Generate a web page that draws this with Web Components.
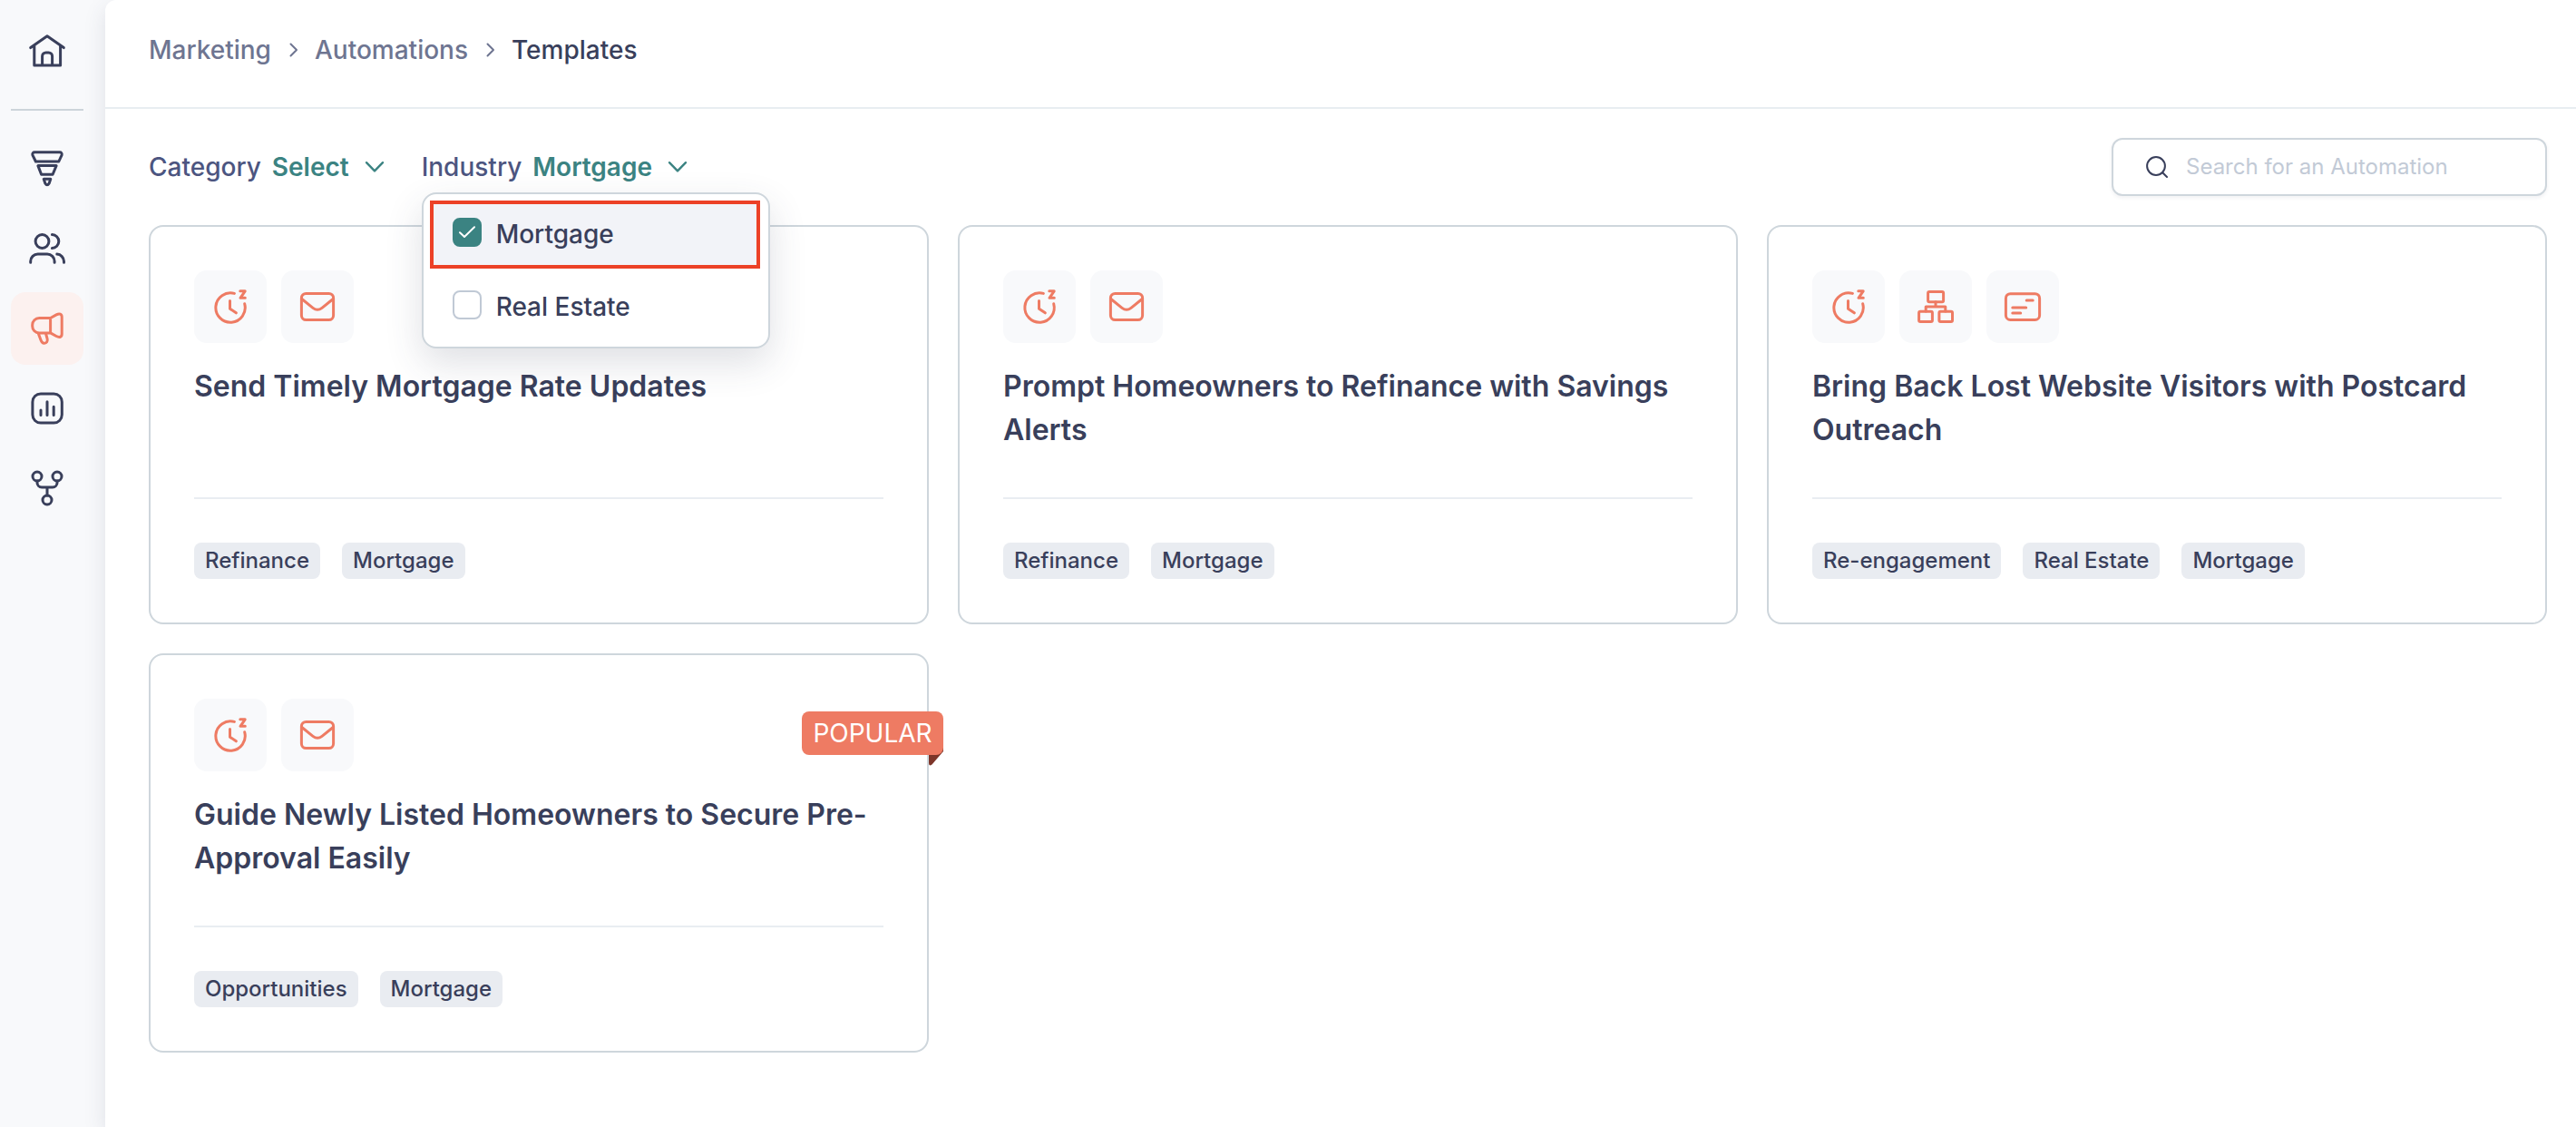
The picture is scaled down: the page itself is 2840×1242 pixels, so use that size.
<!DOCTYPE html>
<html lang="en">
<head>
<meta charset="utf-8">
<title>Automation templates</title>
<style>
html,body{margin:0;height:100%}
body{font-family:Inter,"Liberation Sans",sans-serif;color:#393f5b;background:#f8f9fb;overflow:hidden}
</style>
</head>
<body>
<app-shell>
  <side-nav slot="nav"></side-nav>
  <bread-crumbs slot="header">
    <span>Marketing</span><span>Automations</span><span>Templates</span>
  </bread-crumbs>
  <filter-bar>
    <filter-select label="Category" value="Select"></filter-select>
    <filter-select label="Industry" value="Mortgage">
      <option-menu slot="menu">
        <check-option checked>Mortgage</check-option>
        <check-option>Real Estate</check-option>
      </option-menu>
    </filter-select>
    <search-box slot="end" placeholder="Search for an Automation"></search-box>
  </filter-bar>
  <card-grid>
    <template-card icons="timer mail">Send Timely Mortgage Rate Updates
      <tag-chip slot="tags">Refinance</tag-chip><tag-chip slot="tags">Mortgage</tag-chip>
    </template-card>
    <template-card icons="timer mail">Prompt Homeowners to Refinance with Savings Alerts
      <tag-chip slot="tags">Refinance</tag-chip><tag-chip slot="tags">Mortgage</tag-chip>
    </template-card>
    <template-card icons="timer tree postcard">Bring Back Lost Website Visitors with Postcard Outreach
      <tag-chip slot="tags">Re-engagement</tag-chip><tag-chip slot="tags">Real Estate</tag-chip><tag-chip slot="tags">Mortgage</tag-chip>
    </template-card>
    <template-card icons="timer mail">Guide Newly Listed Homeowners to Secure Pre-Approval Easily
      <corner-ribbon slot="ribbon">POPULAR</corner-ribbon>
      <tag-chip slot="tags">Opportunities</tag-chip><tag-chip slot="tags">Mortgage</tag-chip>
    </template-card>
  </card-grid>
</app-shell>
<script>
const ICONS = {
  home: '<path d="M21.7 36.6 40 23.7l18.3 12.9M25.8 34.5V56h28.8V34.5M34.6 56V46a4 4 0 0 1 4-4h3a4 4 0 0 1 4 4v10"/>',
  funnel: '<path d="M26.2 21.8h27.6a2.3 2.3 0 0 1 2.3 3l-3.3 7.2H27.4l-3.5-7.2a2.3 2.3 0 0 1 2.3-3zM29.9 36.6h20.2l-4 9.7H33.6zM36.2 51.3h7.6l-1.6 4.6q-2.2 3.8-4.4 0z"/>',
  users: '<circle cx="34.5" cy="32" r="7.4"/><path d="M45.4 24.6a7.4 7.4 0 0 1 0 14.8M21.7 55.3V54a8 8 0 0 1 8-8h10.4a8 8 0 0 1 8 8v1.3M50.8 46.1a8.2 8.2 0 0 1 7.7 8v1.2"/>',
  megaphone: '<path d="M43.6 28.5H31.2a7.5 7.5 0 0 0-7.5 7.5v1.4a7.5 7.5 0 0 0 7.5 7.5h12.4zM43.6 28.500l6.500-3.600c3.500-1.900 6.100-1 6.100 2.600v18.400c0 3.600-2.600 4.500-6.100 2.600l-6.500-3.600M30.2 45.2l2.700 7.400c1 2.800 2.400 3.900 4 3.700 2.600-.2 3.900-2.400 3.200-5l-1.600-5.800"/>',
  chart: '<rect x="23.9" y="23.9" width="32.4" height="32.2" rx="9"/><path d="M33 42v5.6M40 32.8v14.8M47.2 38.2v9.4"/>',
  branch: '<circle cx="29" cy="27" r="5"/><circle cx="51" cy="27" r="5"/><circle cx="40" cy="53" r="5"/><path d="M29 32v2a5 5 0 0 0 5 5h12a5 5 0 0 0 5-5v-2M40 39v9"/>',
  timer: '<path d="M44.4 25.4A16.2 16.2 0 1 0 55.7 36.8M39.5 33.5v8.7l6.8 4.6"/><path d="M50.8 22.8h5.4l-5.2 7.5h5.300"/>',
  mail: '<rect x="22.4" y="25.4" width="35.2" height="29.2" rx="5"/><path d="M22.800 31.500 35 41.300q5 4 10 0l12.200-9.800"/>',
  tree: '<rect x="31.6" y="23.4" width="17" height="11.4" rx="1.5"/><rect x="21.6" y="45.2" width="14.8" height="11.2" rx="1.5"/><rect x="43.9" y="45.2" width="14.6" height="11.2" rx="1.5"/><path d="M40 34.8V40M29.2 45V40h21.6v5"/>',
  postcard: '<rect x="21.4" y="25.7" width="37.2" height="28.7" rx="5"/><path d="M44.2 33h7M28.8 41h14.9M28.8 47h8.9"/>'
};
const glyph = name => `<svg viewBox="0 0 80 80" width="80" height="80" fill="none" stroke="currentColor" stroke-width="3" stroke-linecap="round" stroke-linejoin="round" aria-hidden="true">${ICONS[name]}</svg>`;

class Base extends HTMLElement {
  connectedCallback() {
    if (this.shadowRoot) return;
    this.attachShadow({ mode: 'open' }).innerHTML =
      `<style>*{box-sizing:border-box}:host{box-sizing:border-box}svg{display:block;flex:none}${this.css}</style>${this.html}`;
  }
}
const define = (tag, css, html) => customElements.define(tag, class extends Base {
  get css() { return css; }
  get html() { return typeof html === 'function' ? html(this) : html; }
});

define('app-shell', `
  :host{display:flex;height:100vh;background:#f8f9fb}
  main{flex:1;min-width:0;background:#fff;border-top-left-radius:12px;box-shadow:0 8px 24px rgba(54,61,89,.13)}
  header{display:flex;height:120px;border-bottom:2px solid #e8edf1;padding:33px 48px 0}
  section{padding:32px 32px 0 48px}`,
  '<slot name="nav"></slot><main><header><slot name="header"></slot></header><section><slot></slot></section></main>');

define('nav-item', `
  :host{display:block;width:80px;height:80px;border-radius:16px;color:#393f5b}
  :host([active]){background:#fcf1ef;color:#ee7b63}`,
  el => glyph(el.getAttribute('icon')));

define('side-nav', `
  :host{display:flex;flex-direction:column;align-items:flex-start;width:116px;padding:16px 12px}
  hr{width:80px;height:2px;border:0;margin:24px 0;background:#cdd4da}
  nav{display:flex;flex-direction:column;gap:8px}`,
  `<nav-item icon="home"></nav-item><hr><nav>${['funnel', 'users', 'megaphone', 'chart', 'branch']
    .map(n => `<nav-item icon="${n}"${n === 'megaphone' ? ' active' : ''}></nav-item>`).join('')}</nav>`);

define('bread-crumbs', `
  :host{display:flex;align-items:center;height:44px;font-size:28px;line-height:44px;font-weight:500;color:#6e7591}
  ol{display:flex;align-items:center;margin:0;padding:0;list-style:none}
  li:last-child{color:#393f5b}
  svg{margin:0 17px 0 19px}`,
  el => '<ol>' + [...el.children].map(c => `<li>${c.textContent}</li>`)
    .join('<svg width="12" height="18" viewBox="0 0 12 18" fill="none" stroke="#6e7591" stroke-width="2" stroke-linecap="round" stroke-linejoin="round"><path d="M2.5 2.5 9 9l-6.500 6.500"/></svg>') + '</ol>');

define('filter-bar', `
  :host{display:flex;align-items:center;justify-content:space-between;height:64px}
  div{display:flex;gap:41px}`,
  '<div><slot></slot></div><slot name="end"></slot>');

define('filter-select', `
  :host{display:block;position:relative;font-size:28px;line-height:44px;white-space:nowrap}
  .row{display:flex;align-items:center}
  .label{font-weight:500;color:#4c5580;margin-right:12px}
  .value{font-weight:600;color:#3b8382}
  svg{margin-left:17px}`,
  el => `<div class="row"><span class="label">${el.getAttribute('label')}</span><span class="value">${el.getAttribute('value')}</span>
    <svg width="22" height="14" viewBox="0 0 22 14" fill="none" stroke="#3b8382" stroke-width="2.4" stroke-linecap="round" stroke-linejoin="round"><path d="M2 2.200 11 11.400l9-9.200"/></svg></div><slot name="menu"></slot>`);

define('option-menu', `
  :host{position:absolute;z-index:5;left:0;top:50px;width:384px;height:172px;padding:7px;border:2px solid #ced6dc;border-radius:16px;background:#fff;box-shadow:0 16px 40px rgba(54,61,89,.16)}`,
  '<slot></slot>');

define('check-option', `
  :host{display:flex;align-items:center;gap:16px;height:75px;width:364px;margin-bottom:5px;padding:0 0 0 25px;font-size:28px;line-height:44px;font-weight:500}
  :host([checked]){border:4px solid #ec4127;padding-left:21px;background:#f2f3f8}
  i{display:flex;align-items:center;justify-content:center;width:32px;height:32px;margin-top:-5px;border:2px solid #c0c9d5;border-radius:8px;background:#fff}
  :host([checked]) i{border-color:#3b8382;background:#3b8382}
  span{margin-top:-1px}`,
  el => `<i>${el.hasAttribute('checked') ? '<svg width="20" height="16" viewBox="0 0 20 16" fill="none" stroke="#fff" stroke-width="2" stroke-linecap="round" stroke-linejoin="round"><path d="M2 8.200 7 13 18 2.300"/></svg>' : ''}</i><span><slot></slot></span>`);

define('search-box', `
  :host{display:flex;align-items:center;width:480px;height:64px;padding-left:36px;border:2px solid #ced6dc;border-radius:12px;background:#fff;box-shadow:0 2px 4px rgba(54,61,89,.07);font-size:24px;line-height:32px;color:#c2cad6}
  svg{margin-right:20px}`,
  el => `<svg width="24" height="24" viewBox="0 0 24 24" fill="none" stroke="#393f5b" stroke-width="2" stroke-linecap="round"><circle cx="11" cy="11" r="9.900"/><path d="m18.200 18.200 4.800 4.800"/></svg><span>${el.getAttribute('placeholder')}</span>`);

define('card-grid', ':host{display:grid;grid-template-columns:repeat(3,1fr);gap:32px;margin-top:32px}', '<slot></slot>');

define('template-card', `
  :host{display:flex;flex-direction:column;position:relative;height:440px;padding:48px;border:2px solid #ced6dc;border-radius:16px;background:#fff}
  .icons{display:flex;gap:16px;color:#ee7b63}
  .tile{width:80px;height:80px;border-radius:14px;background:#f8f9fb}
  h2{margin:24px 0 0;height:146px;font-size:32px;line-height:48px;font-weight:600}
  .tags{display:flex;gap:24px;padding-top:48px;border-top:2px solid #e9edf2}`,
  el => `<div class="icons">${el.getAttribute('icons').split(' ').map(n => `<div class="tile">${glyph(n)}</div>`).join('')}</div>
    <h2><slot></slot></h2><div class="tags"><slot name="tags"></slot></div><slot name="ribbon"></slot>`);

define('tag-chip', ':host{display:block;height:40px;padding:0 12px;border-radius:8px;background:#e9ecf1;font-size:24px;line-height:40px;font-weight:500;white-space:nowrap}', '<slot></slot>');

define('corner-ribbon', `
  :host{display:block;position:absolute;right:-18px;top:62px;width:156px}
  span{display:block;position:relative;height:48px;border-radius:8px;background:#ee7b63;color:#fff;font-size:28px;line-height:48px;text-align:center}
  svg{position:absolute;top:40px;left:140px}`,
  '<svg width="16" height="20" viewBox="0 0 16 20"><path d="M0 0h16v4L3.500 18.500Q0 21 0 17z" fill="#7d3529"/></svg><span><slot></slot></span>');
</script>
</body>
</html>
